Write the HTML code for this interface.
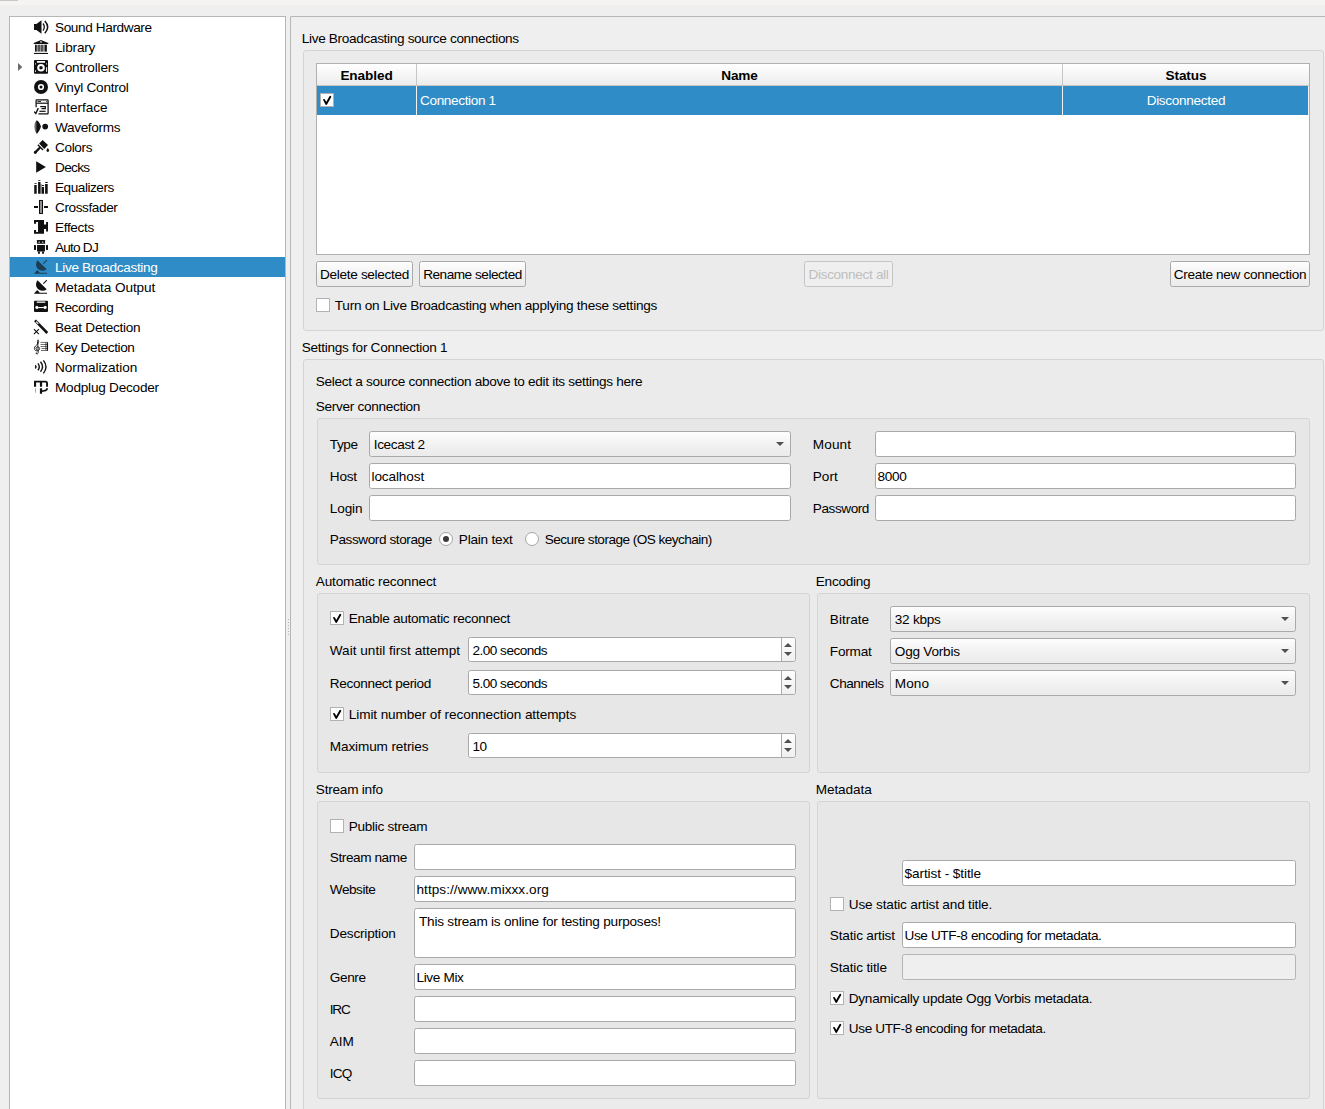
<!DOCTYPE html>
<html><head><meta charset="utf-8"><title>Preferences</title>
<style>
html,body{margin:0;padding:0}
body{width:1325px;height:1109px;overflow:hidden;position:relative;background:#efefef;
 font-family:"Liberation Sans",sans-serif;font-size:13.6px;color:#000;letter-spacing:-0.32px}
div,svg,i{position:absolute;box-sizing:border-box}
.t{line-height:20px;height:20px;white-space:nowrap}
.b{font-weight:bold;letter-spacing:-0.1px}
.gb{border:1px solid #d4d4d4;border-radius:3px;background:rgba(0,0,0,0.016)}
.le{border:1px solid #a9a9a9;border-radius:2.5px;background:#fff;white-space:nowrap;overflow:hidden;padding-top:1px}
.le.dis{background:#efefef;border-color:#b4b4b4}
.cb{border:1px solid #a9a9a9;border-radius:2.5px;background:linear-gradient(#fefefe,#f0f0f0 60%,#ebebeb);padding-left:3.8px;padding-top:1px;white-space:nowrap}
.cb .arr{right:6px;top:10px}
.sp{border:1px solid #a9a9a9;border-radius:2.5px;background:#fff;padding-left:3.5px;padding-top:1px;white-space:nowrap}
.spb{right:0;top:0;bottom:0;width:14px;border-left:1px solid #acacac;background:linear-gradient(#fdfdfd,#f0f0f0);border-radius:0 2px 2px 0}
.spb svg{left:2px}
.ck{width:14px;height:14px;border:1px solid #b2b2b2;border-radius:.5px;background:#fff}
.ck svg{left:-1px;top:-1px}
.rd{width:14px;height:14px;border:1px solid #a4a4a4;border-radius:50%;background:#fff}
.rd i{left:3px;top:3px;width:6px;height:6px;border-radius:50%;background:#3a3a3a}
.bt{border:1px solid #a9a9a9;border-radius:2.5px;background:linear-gradient(#fefefe,#f1f1f1 55%,#ececec);text-align:center;white-space:nowrap;padding-top:1px}
.bt.dis{color:#bebebe;border-color:#c4c4c4;background:#efefef}
.row{left:0;width:275px;height:20px}
.row .t{left:45px;top:1px}
.row svg{left:23px;top:2px}
.row.sel{background:#308cc6;color:#fff}
</style></head><body>
<div style="left:0;top:0;width:1325px;height:5px;background:#f5f4f2"></div>
<div style="left:0;top:0;width:18px;height:1px;background:#c6c6c4"></div>
<div id="side" style="left:9px;top:16px;width:277px;height:1100px;border:1px solid #b6b6b6;background:#fff">
<div class="row" style="top:0px"><svg width="16" height="16" viewBox="0 0 16 16" style="overflow:visible"><path d="M1 5H3.4L8.5 1.2V14.8L3.4 11H1z" fill="#111" /><path d="M10 4.5Q12.6 8 10 11.5" fill="none" stroke="#111" stroke-width="1.3" /><path d="M11.8 2Q17.6 8 11.8 14.2" fill="none" stroke="#111" stroke-width="1.5" /></svg><div class="t"><span style="letter-spacing:-0.380px">Sound Hardware</span></div></div>
<div class="row" style="top:20px"><svg width="16" height="16" viewBox="0 0 16 16" style="overflow:visible"><path d="M8 .9L15.3 4.1V4.9H.7V4.1z" fill="#111" /><rect x="7.2" y="2.1" width="1.6" height="1.6" fill="#c8c8c8"/><rect x="2.05" y="5.8" width="11.8" height="6.8" fill="#949494"/><path d="M2.05 5.8h1.5v6.8h-1.5zM5.5 5.8h1v6.8H5.500zM8.5 5.8h1v6.8H8.500zM11.800 5.8h2v6.8h-2z" fill="#111" /><path d="M1 13.9h14V15H1z" fill="#111" /></svg><div class="t"><span style="letter-spacing:-0.195px">Library</span></div></div>
<div class="row" style="top:40px"><svg width="16" height="16" viewBox="0 0 16 16" style="overflow:visible"><path d="M1 2a1 1 0 011-1h12a1 1 0 011 1v11.800a1 1 0 01-1 1H2a1 1 0 01-1-1z" fill="#111" /><rect x="3.9" y="2.05" width="8.2" height="1.65" rx=".3" fill="#fff"/><circle cx="8" cy="8.8" r="3.8" fill="#fff"/><circle cx="8" cy="8.8" r="1.75" fill="#111"/><rect x="2.05" y="4.2" width=".9" height="1.4" rx=".4" fill="#fff"/><rect x="13.1" y="4.2" width=".9" height="1.4" rx=".4" fill="#fff"/><rect x="2.05" y="11.2" width=".9" height="1.700" rx=".4" fill="#fff"/><rect x="13.1" y="8" width="1" height="4.9" rx=".4" fill="#fff"/></svg><div class="t"><span style="letter-spacing:-0.176px">Controllers</span></div></div>
<div class="row" style="top:60px"><svg width="16" height="16" viewBox="0 0 16 16" style="overflow:visible"><circle cx="8" cy="8" r="7" fill="#111"/><circle cx="8" cy="8" r="2.3" fill="none" stroke="#fff" stroke-width="1.6"/></svg><div class="t"><span style="letter-spacing:-0.248px">Vinyl Control</span></div></div>
<div class="row" style="top:80px"><svg width="16" height="16" viewBox="0 0 16 16" style="overflow:visible"><path d="M3.1 8.3V1.6a.7.7 0 01.7-.7H14.400a.7.7 0 01.7.7V14.200a.7.7 0 01-.7.7H5.400" fill="none" stroke="#111" stroke-width="1.25" /><path d="M3.1 4.2H15.1" fill="none" stroke="#111" stroke-width="1.2" /><path d="M4.5 2.500H8" fill="none" stroke="#111" stroke-width="0.9" /><path d="M13.3 2.500H14.200" fill="none" stroke="#111" stroke-width="0.9" /><path d="M7.200 7.700H12.300V9.600H8.500" fill="none" stroke="#111" stroke-width="1.2" /><path d="M6.400 12.300H12.600" fill="none" stroke="#111" stroke-width="1.2" /><path d="M1.2 12.600L2.800 14.500 5.300 9.100" fill="none" stroke="#111" stroke-width="1.4" /></svg><div class="t"><span style="letter-spacing:-0.045px">Interface</span></div></div>
<div class="row" style="top:100px"><svg width="16" height="16" viewBox="0 0 16 16" style="overflow:visible"><defs><linearGradient id="wg" x1="0" x2="1"><stop offset="0" stop-color="#111" stop-opacity=".25"/><stop offset=".45" stop-color="#111" stop-opacity="1"/><stop offset="1" stop-color="#111"/></linearGradient></defs><path d="M3.6 1.2C4.6 1.4 6.2 3 7.4 6 7.8 7 8 7.4 8 7.6 8 7.800 7.800 8.200 7.400 9.200 6.200 12.200 4.600 14.400 3.600 14.800 2.400 13 1 10 1 7.600 1 5 2.400 2.400 3.600 1.200z" fill="url(#wg)"/><circle cx="12.2" cy="7.600" r="2.85" fill="#111"/></svg><div class="t"><span style="letter-spacing:-0.348px">Waveforms</span></div></div>
<div class="row" style="top:120px"><svg width="16" height="16" viewBox="0 0 16 16" style="overflow:visible"><path d="M9.600 1L15 6.100 11.300 9.900 6.100 4.600z" fill="#111" /><path d="M5.300 5.300L10.500 10.500 9.500 11.400 4.400 6.200z" fill="#111" /><path d="M2.300 13.400L6.600 9" fill="none" stroke="#111" stroke-width="2.3" stroke-linecap="round"/><circle cx="2.300" cy="13.400" r="1.45" fill="#111"/><path d="M14.800 9c.9 1.300 1.300 2 1.300 2.600a1.300 1.300 0 01-2.600 0c0-.6.400-1.300 1.300-2.600z" fill="#111" /></svg><div class="t"><span style="letter-spacing:-0.364px">Colors</span></div></div>
<div class="row" style="top:140px"><svg width="16" height="16" viewBox="0 0 16 16" style="overflow:visible"><path d="M3.2 2.200L12.900 8 3.200 13.800z" fill="#111" /></svg><div class="t"><span style="letter-spacing:-0.676px">Decks</span></div></div>
<div class="row" style="top:160px"><svg width="16" height="16" viewBox="0 0 16 16" style="overflow:visible"><path d="M1.300 6.100h2.400v8.700H1.300zM5.100 3.100h2.400v11.700H5.100zM8.800 8h2.200v6.800H8.800zM12.100 5h2.600v9.800h-2.600z" fill="#111" /><path d="M1.500 3.900h2.200v.9H1.500zM5.200 1.200h2.200v.8H5.200zM8.900 6.100h2.100v.8H8.900zM12.200 3.100h2.500v.8h-2.500z" fill="#111" /><rect x="7.500" y="5" width="1.400" height="9.800" fill="#111" opacity=".45"/><rect x="1.000" y="6.100" width=".4" height="8.700" fill="#111" opacity=".4"/></svg><div class="t"><span style="letter-spacing:-0.467px">Equalizers</span></div></div>
<div class="row" style="top:180px"><svg width="16" height="16" viewBox="0 0 16 16" style="overflow:visible"><path d="M1 8h4M11 8h4" fill="none" stroke="#111" stroke-width="1.8" /><rect x="6.500" y="1.470" width="3" height="13.000" fill="#909090" stroke="#111" stroke-width="1"/></svg><div class="t"><span style="letter-spacing:-0.408px">Crossfader</span></div></div>
<div class="row" style="top:200px"><svg width="16" height="16" viewBox="0 0 16 16" style="overflow:visible"><path d="M1 1H11V5.600H13.100V2.900H15V12.600H13.100V9.900H11V14.800H1V11H3.100V12.900H5V2.900H3.100V4.800H1z" fill="#111" /></svg><div class="t"><span style="letter-spacing:-0.345px">Effects</span></div></div>
<div class="row" style="top:220px"><svg width="16" height="16" viewBox="0 0 16 16" style="overflow:visible"><path d="M4.300 1h7.400a.4.4 0 01.4.4V4.400a.4.4 0 01-.4.4H4.300a.4.4 0 01-.4-.4V1.400a.4.4 0 01.4-.4z" fill="#111" /><ellipse cx="6.200" cy="3.100" rx=".9" ry=".7" fill="#e6e6e6"/><ellipse cx="9.700" cy="3.100" rx=".9" ry=".7" fill="#e6e6e6"/><path d="M4.050 6.100h7.900v5.900a.6.600 0 01-.6.600H4.650a.6.600 0 01-.6-.6z" fill="#111" /><path d="M1.300 6.100h1.400a.3.300 0 01.3.300V10.600a.3.300 0 01-.3.300H1.300a.3.300 0 01-.3-.3V6.400a.3.300 0 01.3-.3zM13.300 6.100h1.400a.3.300 0 01.3.300V10.600a.3.300 0 01-.3.300h-1.400a.3.300 0 01-.3-.3V6.400a.3.300 0 01.3-.3z" fill="#111" /><path d="M5 12.400h1.900v2.400H5zM9.100 12.400H11v2.400H9.100z" fill="#111" /></svg><div class="t"><span style="letter-spacing:-0.780px">Auto DJ</span></div></div>
<div class="row sel" style="top:240px"><svg width="16" height="16" viewBox="0 0 16 16" style="overflow:visible"><path d="M4.5 1.2L13.7 10.2A6.45 6.45 0 0 1 4.5 1.2z" fill="#1c3d54" /><path d="M10.3 4.6L13.9 1.2" fill="none" stroke="#1c3d54" stroke-width="1.1" /><path d="M.9 14.8L4.2 11.1 6.8 13.8H14V14.8z" fill="#1c3d54" /></svg><div class="t"><span style="letter-spacing:-0.327px">Live Broadcasting</span></div></div>
<div class="row" style="top:260px"><svg width="16" height="16" viewBox="0 0 16 16" style="overflow:visible"><path d="M4.5 1.2L13.7 10.2A6.45 6.45 0 0 1 4.5 1.2z" fill="#111" /><path d="M10.3 4.6L13.9 1.2" fill="none" stroke="#111" stroke-width="1.1" /><path d="M.9 14.8L4.2 11.1 6.8 13.8H14V14.8z" fill="#111" /></svg><div class="t"><span style="letter-spacing:-0.064px">Metadata Output</span></div></div>
<div class="row" style="top:280px"><svg width="16" height="16" viewBox="0 0 16 16" style="overflow:visible"><path d="M1 2.800a1 1 0 011-1h12a1 1 0 011 1v9.100a1 1 0 01-1 1H2a1 1 0 01-1-1z" fill="#111" /><rect x="3.700" y="2.550" width="8.600" height="1.150" rx=".3" fill="#fff"/><circle cx="3.900" cy="8.500" r="1.750" fill="#777"/><circle cx="12.100" cy="8.500" r="1.750" fill="#777"/><circle cx="3.900" cy="8.500" r="1.400" fill="#fff"/><circle cx="12.100" cy="8.500" r="1.400" fill="#fff"/><rect x="5.200" y="8" width="5.600" height="1.100" fill="#fff"/></svg><div class="t"><span style="letter-spacing:-0.397px">Recording</span></div></div>
<div class="row" style="top:300px"><svg width="16" height="16" viewBox="0 0 16 16" style="overflow:visible"><path d="M2 1.400L14.300 14" fill="none" stroke="#111" stroke-width="2.6" /><path d="M3.100 2.600L5.300 4.900" fill="none" stroke="#fff" stroke-width="1.1" /><path d="M.9 10.100L5.900 15.100M5.900 10.100L.9 15.100" fill="none" stroke="#111" stroke-width="1.1" /></svg><div class="t"><span style="letter-spacing:-0.277px">Beat Detection</span></div></div>
<div class="row" style="top:320px"><svg width="16" height="16" viewBox="0 0 16 16" style="overflow:visible"><path d="M4.8 5C4.3 3 4.300 1.200 5 .8 5.800 1.600 5.900 3 5 4.600 3.800 6 1.400 7.200 1.400 9.600 1.400 12.600 6.600 12.600 6.600 9.600 6.600 7.200 3 7.400 3 9.400 3 10.400 3.800 10.800 4.400 10.600" fill="none" stroke="#111" stroke-width="0.9" /><path d="M4.700 3L5.200 13.600C5.200 15.200 3.400 15.200 3.200 14.200" fill="none" stroke="#111" stroke-width="0.9" /><circle cx="3.300" cy="14.100" r=".7" fill="#111"/><path d="M7.500 3.400H15M7.500 5.500H15M7.500 7.500H15M8.500 9.500H15M8 11.500H15" fill="none" stroke="#111" stroke-width="0.6" /><path d="M12.900 3.400v8.100" fill="none" stroke="#111" stroke-width="0.7" /><path d="M14.500 3.400v8.100" fill="none" stroke="#111" stroke-width="1.1" /></svg><div class="t"><span style="letter-spacing:-0.395px">Key Detection</span></div></div>
<div class="row" style="top:340px"><svg width="16" height="16" viewBox="0 0 16 16" style="overflow:visible"><path d="M2.300 6.300Q3.700 7.900 2.300 9.500" fill="none" stroke="#111" stroke-width="1.4" /><path d="M4.900 4.400Q7.700 7.900 4.900 11.400" fill="none" stroke="#111" stroke-width="1.4" /><path d="M7.500 2.800Q11.500 7.800 7.500 12.800" fill="none" stroke="#111" stroke-width="1.4" /><path d="M10.400 1.400Q15.600 7.900 10.400 14.400" fill="none" stroke="#111" stroke-width="1.4" /></svg><div class="t"><span style="letter-spacing:-0.070px">Normalization</span></div></div>
<div class="row" style="top:360px"><svg width="16" height="16" viewBox="0 0 16 16" style="overflow:visible"><path d="M1 1.800H12.500C14.200 1.800 15 2.800 15 4.200V7.700H13.100V4.600c0-.7-.3-1-1-1H9.100V7.700H6.900V3.600H3.100V7.700H1z" fill="#111" /><path d="M6.900 9.350H9.100V11.300C11.500 11.300 13.100 10.800 13.100 9.350H15C15 12 12.500 12.900 9.100 12.900V14.800H6.900z" fill="#111" /><rect x="2.050" y="9.350" width=".6" height="4.300" fill="#111" opacity=".6"/></svg><div class="t"><span style="letter-spacing:-0.227px">Modplug Decoder</span></div></div>
<svg width="5" height="8" viewBox="0 0 5 8" style="left:8px;top:46px"><path d="M0 0L4.3 4L0 8z" fill="#6a6a6a"/></svg>
</div>
<div style="left:288px;top:619px;width:1px;height:16px;background:repeating-linear-gradient(#b4b4b4 0 1px,transparent 1px 3px)"></div>
<div style="left:290px;top:16px;width:1100px;height:1200px;border:1px solid #b6b6b6;border-radius:1px"></div>
<div class="t " style="left:301.8px;top:29px;"><span style="letter-spacing:-0.332px">Live Broadcasting source connections</span></div>
<div class="gb " style="left:303px;top:50px;width:1021px;height:281px;"></div>
<div style="left:316px;top:63px;width:994px;height:192px;border:1px solid #b0b0b0;background:#fff">
<div style="left:0;top:0;width:992px;height:22px;background:linear-gradient(#ffffff,#f6f6f6 50%,#ececec);border-bottom:1px solid #c6c6c6"></div>
<div style="left:99px;top:0;width:1px;height:22px;background:#c6c6c6"></div>
<div style="left:745px;top:0;width:1px;height:22px;background:#c6c6c6"></div>
<div class="t b" style="left:0;top:2px;width:99px;text-align:center">Enabled</div>
<div class="t b" style="left:100px;top:2px;width:645px;text-align:center">Name</div>
<div class="t b" style="left:746px;top:2px;width:246px;text-align:center">Status</div>
<div style="left:0;top:22px;width:992px;height:29px;background:#308cc6"></div>
<div style="left:99px;top:22px;width:1px;height:29px;background:#f2f2f2"></div>
<div style="left:745px;top:22px;width:1px;height:29px;background:#f2f2f2"></div>
<div style="left:991px;top:22px;width:1px;height:29px;background:#f2f2f2"></div>
<div class="t" style="left:103px;top:27px;color:#fff"><span style="letter-spacing:-0.359px">Connection 1</span></div>
<div class="t" style="left:746px;top:27px;width:246px;text-align:center;color:#fff"><span style="letter-spacing:-0.306px">Disconnected</span></div>
</div>
<div class="ck tbl" style="left:320px;top:93px"><svg width="14" height="14" viewBox="0 0 14 14"><path d="M4.1 6.9 L6.2 10.9 L10.3 3.8" fill="none" stroke="#000" stroke-width="1.9" stroke-linecap="round" stroke-linejoin="round"/></svg></div>
<div class="bt" style="left:316px;top:261px;width:97px;height:26px;line-height:24px"><span style="letter-spacing:-0.327px">Delete selected</span></div>
<div class="bt" style="left:419px;top:261px;width:107px;height:26px;line-height:24px"><span style="letter-spacing:-0.473px">Rename selected</span></div>
<div class="bt dis" style="left:804px;top:261px;width:89px;height:26px;line-height:24px"><span style="letter-spacing:-0.330px">Disconnect all</span></div>
<div class="bt" style="left:1170px;top:261px;width:140px;height:26px;line-height:24px"><span style="letter-spacing:-0.307px">Create new connection</span></div>
<div class="ck " style="left:316px;top:298px"></div>
<div class="t " style="left:334.8px;top:296px;"><span style="letter-spacing:-0.265px">Turn on Live Broadcasting when applying these settings</span></div>
<div class="t " style="left:301.8px;top:338px;"><span style="letter-spacing:-0.286px">Settings for Connection 1</span></div>
<div class="gb " style="left:303px;top:359px;width:1021px;height:772px;"></div>
<div class="t " style="left:315.8px;top:372px;"><span style="letter-spacing:-0.299px">Select a source connection above to edit its settings here</span></div>
<div class="t " style="left:315.8px;top:397px;"><span style="letter-spacing:-0.310px">Server connection</span></div>
<div class="gb " style="left:317px;top:418px;width:993px;height:147px;"></div>
<div class="t " style="left:329.8px;top:435px;"><span style="letter-spacing:-0.421px">Type</span></div>
<div class="cb" style="left:369px;top:431px;width:422px;height:26px;line-height:24px"><span style="letter-spacing:-0.378px">Icecast 2</span><svg class="arr" width="8" height="4" viewBox="0 0 8 4"><path d="M0 0h8L4 4z" fill="#505050"/></svg></div>
<div class="t " style="left:329.8px;top:467px;"><span style="letter-spacing:-0.238px">Host</span></div>
<div class="le" style="left:369px;top:463px;width:422px;height:26px;line-height:24px;padding-left:1.5px"><span style="letter-spacing:-0.117px">localhost</span></div>
<div class="t " style="left:329.8px;top:499px;"><span style="letter-spacing:-0.133px">Login</span></div>
<div class="le" style="left:369px;top:495px;width:422px;height:26px;line-height:24px;padding-left:1.5px"></div>
<div class="t " style="left:812.8px;top:435px;"><span style="letter-spacing:0.124px">Mount</span></div>
<div class="le" style="left:875px;top:431px;width:421px;height:26px;line-height:24px;padding-left:1.5px"></div>
<div class="t " style="left:812.8px;top:467px;"><span style="letter-spacing:-0.009px">Port</span></div>
<div class="le" style="left:875px;top:463px;width:421px;height:26px;line-height:24px;padding-left:1.5px"><span style="letter-spacing:-0.312px">8000</span></div>
<div class="t " style="left:812.8px;top:499px;"><span style="letter-spacing:-0.436px">Password</span></div>
<div class="le" style="left:875px;top:495px;width:421px;height:26px;line-height:24px;padding-left:1.5px"></div>
<div class="t " style="left:329.8px;top:530px;"><span style="letter-spacing:-0.420px">Password storage</span></div>
<div class="rd" style="left:439px;top:532px"><i></i></div>
<div class="t " style="left:458.8px;top:530px;"><span style="letter-spacing:-0.212px">Plain text</span></div>
<div class="rd" style="left:525px;top:532px"></div>
<div class="t " style="left:544.8px;top:530px;"><span style="letter-spacing:-0.539px">Secure storage (OS keychain)</span></div>
<div class="t " style="left:315.8px;top:572px;"><span style="letter-spacing:-0.191px">Automatic reconnect</span></div>
<div class="t " style="left:815.8px;top:572px;"><span style="letter-spacing:-0.261px">Encoding</span></div>
<div class="gb " style="left:317px;top:593px;width:493px;height:180px;"></div>
<div class="gb " style="left:817px;top:593px;width:493px;height:180px;"></div>
<div class="ck " style="left:330px;top:611px"><svg width="14" height="14" viewBox="0 0 14 14"><path d="M4.1 6.9 L6.2 10.9 L10.3 3.8" fill="none" stroke="#000" stroke-width="1.9" stroke-linecap="round" stroke-linejoin="round"/></svg></div>
<div class="t " style="left:348.8px;top:609px;"><span style="letter-spacing:-0.278px">Enable automatic reconnect</span></div>
<div class="t " style="left:329.8px;top:641px;"><span style="letter-spacing:0.001px">Wait until first attempt</span></div>
<div class="sp" style="left:468px;top:637px;width:328px;height:25px;line-height:23px"><span style="letter-spacing:-0.523px">2.00 seconds</span><div class="spb"><svg width="8" height="4" viewBox="0 0 8 4" style="top:5px"><path d="M0 4h8L4 0z" fill="#505050"/></svg><svg width="8" height="4" viewBox="0 0 8 4" style="top:14px"><path d="M0 0h8L4 4z" fill="#505050"/></svg></div></div>
<div class="t " style="left:329.8px;top:674px;"><span style="letter-spacing:-0.335px">Reconnect period</span></div>
<div class="sp" style="left:468px;top:670px;width:328px;height:25px;line-height:23px"><span style="letter-spacing:-0.523px">5.00 seconds</span><div class="spb"><svg width="8" height="4" viewBox="0 0 8 4" style="top:5px"><path d="M0 4h8L4 0z" fill="#505050"/></svg><svg width="8" height="4" viewBox="0 0 8 4" style="top:14px"><path d="M0 0h8L4 4z" fill="#505050"/></svg></div></div>
<div class="ck " style="left:330px;top:707px"><svg width="14" height="14" viewBox="0 0 14 14"><path d="M4.1 6.9 L6.2 10.9 L10.3 3.8" fill="none" stroke="#000" stroke-width="1.9" stroke-linecap="round" stroke-linejoin="round"/></svg></div>
<div class="t " style="left:348.8px;top:705px;"><span style="letter-spacing:-0.103px">Limit number of reconnection attempts</span></div>
<div class="t " style="left:329.8px;top:737px;"><span style="letter-spacing:-0.130px">Maximum retries</span></div>
<div class="sp" style="left:468px;top:733px;width:328px;height:25px;line-height:23px"><span style="letter-spacing:-0.463px">10</span><div class="spb"><svg width="8" height="4" viewBox="0 0 8 4" style="top:5px"><path d="M0 4h8L4 0z" fill="#505050"/></svg><svg width="8" height="4" viewBox="0 0 8 4" style="top:14px"><path d="M0 0h8L4 4z" fill="#505050"/></svg></div></div>
<div class="t " style="left:829.8px;top:610px;"><span style="letter-spacing:0.015px">Bitrate</span></div>
<div class="cb" style="left:890px;top:606px;width:406px;height:26px;line-height:24px"><span style="letter-spacing:-0.261px">32 kbps</span><svg class="arr" width="8" height="4" viewBox="0 0 8 4"><path d="M0 0h8L4 4z" fill="#505050"/></svg></div>
<div class="t " style="left:829.8px;top:642px;"><span style="letter-spacing:-0.210px">Format</span></div>
<div class="cb" style="left:890px;top:638px;width:406px;height:26px;line-height:24px"><span style="letter-spacing:-0.227px">Ogg Vorbis</span><svg class="arr" width="8" height="4" viewBox="0 0 8 4"><path d="M0 0h8L4 4z" fill="#505050"/></svg></div>
<div class="t " style="left:829.8px;top:674px;"><span style="letter-spacing:-0.455px">Channels</span></div>
<div class="cb" style="left:890px;top:670px;width:406px;height:26px;line-height:24px"><span style="letter-spacing:0.046px">Mono</span><svg class="arr" width="8" height="4" viewBox="0 0 8 4"><path d="M0 0h8L4 4z" fill="#505050"/></svg></div>
<div class="t " style="left:315.8px;top:780px;"><span style="letter-spacing:-0.229px">Stream info</span></div>
<div class="t " style="left:815.8px;top:780px;"><span style="letter-spacing:-0.111px">Metadata</span></div>
<div class="gb " style="left:317px;top:801px;width:493px;height:298px;"></div>
<div class="gb " style="left:817px;top:801px;width:493px;height:298px;"></div>
<div class="ck " style="left:330px;top:819px"></div>
<div class="t " style="left:348.8px;top:817px;"><span style="letter-spacing:-0.289px">Public stream</span></div>
<div class="t " style="left:329.8px;top:848px;"><span style="letter-spacing:-0.419px">Stream name</span></div>
<div class="le" style="left:414px;top:844px;width:382px;height:26px;line-height:24px;padding-left:1.5px"></div>
<div class="t " style="left:329.8px;top:880px;"><span style="letter-spacing:-0.466px">Website</span></div>
<div class="le" style="left:414px;top:876px;width:382px;height:26px;line-height:24px;padding-left:1.5px"><span style="letter-spacing:0.041px">https://www.mixxx.org</span></div>
<div class="t " style="left:329.8px;top:924px;"><span style="letter-spacing:-0.191px">Description</span></div>
<div class="le" style="left:414px;top:908px;width:382px;height:50px;line-height:20px;padding:3px 0 0 4px"><span style="letter-spacing:-0.226px">This stream is online for testing purposes!</span></div>
<div class="t " style="left:329.8px;top:968px;"><span style="letter-spacing:-0.396px">Genre</span></div>
<div class="le" style="left:414px;top:964px;width:382px;height:26px;line-height:24px;padding-left:1.5px"><span style="letter-spacing:-0.357px">Live Mix</span></div>
<div class="t " style="left:329.8px;top:1000px;"><span style="letter-spacing:-1.207px">IRC</span></div>
<div class="le" style="left:414px;top:996px;width:382px;height:26px;line-height:24px;padding-left:1.5px"></div>
<div class="t " style="left:329.8px;top:1032px;"><span style="letter-spacing:-0.124px">AIM</span></div>
<div class="le" style="left:414px;top:1028px;width:382px;height:26px;line-height:24px;padding-left:1.5px"></div>
<div class="t " style="left:329.8px;top:1064px;"><span style="letter-spacing:-0.791px">ICQ</span></div>
<div class="le" style="left:414px;top:1060px;width:382px;height:26px;line-height:24px;padding-left:1.5px"></div>
<div class="le" style="left:902px;top:860px;width:394px;height:26px;line-height:24px;padding-left:1.5px"><span style="letter-spacing:-0.082px">$artist - $title</span></div>
<div class="ck " style="left:830px;top:897px"></div>
<div class="t " style="left:848.8px;top:895px;"><span style="letter-spacing:-0.174px">Use static artist and title.</span></div>
<div class="t " style="left:829.8px;top:926px;"><span style="letter-spacing:-0.172px">Static artist</span></div>
<div class="le" style="left:902px;top:922px;width:394px;height:26px;line-height:24px;padding-left:1.5px"><span style="letter-spacing:-0.384px">Use UTF-8 encoding for metadata.</span></div>
<div class="t " style="left:829.8px;top:958px;"><span style="letter-spacing:-0.153px">Static title</span></div>
<div class="le dis" style="left:902px;top:954px;width:394px;height:26px;line-height:24px;padding-left:1.5px"></div>
<div class="ck " style="left:830px;top:991px"><svg width="14" height="14" viewBox="0 0 14 14"><path d="M4.1 6.9 L6.2 10.9 L10.3 3.8" fill="none" stroke="#000" stroke-width="1.9" stroke-linecap="round" stroke-linejoin="round"/></svg></div>
<div class="t " style="left:848.8px;top:989px;"><span style="letter-spacing:-0.269px">Dynamically update Ogg Vorbis metadata.</span></div>
<div class="ck " style="left:830px;top:1021px"><svg width="14" height="14" viewBox="0 0 14 14"><path d="M4.1 6.9 L6.2 10.9 L10.3 3.8" fill="none" stroke="#000" stroke-width="1.9" stroke-linecap="round" stroke-linejoin="round"/></svg></div>
<div class="t " style="left:848.8px;top:1019px;"><span style="letter-spacing:-0.384px">Use UTF-8 encoding for metadata.</span></div>
</body></html>
